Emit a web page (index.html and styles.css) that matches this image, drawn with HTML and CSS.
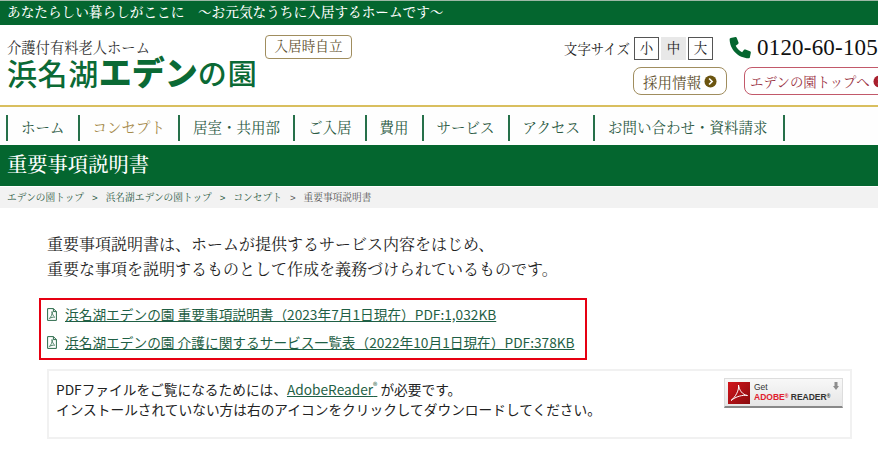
FILE: index.html
```html
<!DOCTYPE html>
<html lang="ja">
<head>
<meta charset="utf-8">
<title>重要事項説明書</title>
<link rel="stylesheet" href="styles.css">
</head>
<body>
<div class="tagline">あなたらしい暮らしがここに　～お元気なうちに入居するホームです～</div>
<header class="header">
  <div class="brand">
    <div class="brand-text">
      <p class="brand-sub">介護付有料老人ホーム</p>
      <p class="brand-name"><span class="brand-a">浜名湖</span><span class="brand-b">エデン</span><span class="brand-c">の園</span></p>
    </div>
    <span class="badge">入居時自立</span>
  </div>
  <div class="tools">
    <div class="tools-top">
      <span class="size-label">文字サイズ</span>
      <div class="sizes">
        <span class="size">小</span>
        <span class="size size-on">中</span>
        <span class="size">大</span>
      </div>
      <svg class="phone" viewBox="0 0 24 24" width="22" height="22"><path fill="#04662f" d="M1.800 1 7 .1c.7-.1 1.300.2 1.500.9l1.900 5c.2.600 0 1.200-.5 1.500L7.300 9.600c1.500 3 4 5.500 7 7l2.100-2.600c.4-.5 1-.6 1.500-.4l5 2c.7.200 1 .9.900 1.500l-1 5.100c-.1.600-.7 1.100-1.300 1.100C10.300 23.300.7 13.700.7 2.300.7 1.700 1.200 1.100 1.800 1Z"/></svg>
      <span class="tel">0120-60-1050</span>
    </div>
    <div class="tools-bottom">
      <a class="pill pill-gold">採用情報<svg class="go" viewBox="0 0 14 14" width="13" height="13"><circle cx="7" cy="7" r="6.500" fill="#6b5510"/><path d="M5.500 3.800 8.700 7l-3.200 3.200" fill="none" stroke="#fff" stroke-width="1.800"/></svg></a>
      <a class="pill pill-red">エデンの園トップへ<svg class="go" viewBox="0 0 14 14" width="13" height="13"><circle cx="7" cy="7" r="6.500" fill="#a81f2d"/><path d="M5.500 3.800 8.700 7l-3.200 3.200" fill="none" stroke="#fff" stroke-width="1.800"/></svg></a>
    </div>
  </div>
</header>
<nav class="nav">
  <a class="nav-item">ホーム</a>
  <a class="nav-item nav-current">コンセプト</a>
  <a class="nav-item">居室・共用部</a>
  <a class="nav-item">ご入居</a>
  <a class="nav-item">費用</a>
  <a class="nav-item">サービス</a>
  <a class="nav-item">アクセス</a>
  <a class="nav-item">お問い合わせ・資料請求</a>
</nav>
<h1 class="title">重要事項説明書</h1>
<ol class="crumbs">
  <li>エデンの園トップ</li>
  <li>浜名湖エデンの園トップ</li>
  <li>コンセプト</li>
  <li class="crumb-last">重要事項説明書</li>
</ol>
<main class="main">
  <p class="lead">重要事項説明書は、ホームが提供するサービス内容をはじめ、<br>重要な事項を説明するものとして作成を義務づけられているものです。</p>
  <div class="links">
    <a class="link"><svg class="pdf" viewBox="0 0 10 13" width="10" height="13"><path d="M.6.600h5.800l3 3v8.800H.6Z M6.400.6v3h3" fill="none" stroke="#2c6a4a"/><path d="M5 3.500c.4 3-1 5.500-2.700 7 2-1 3.500-1.500 5.400-1.300-1.500-1-2.400-3.200-2.700-5.700Z" fill="none" stroke="#2c6a4a" stroke-width=".8"/></svg><span>浜名湖エデンの園 重要事項説明書（2023年7月1日現在）PDF:1,032KB</span></a>
    <a class="link"><svg class="pdf" viewBox="0 0 10 13" width="10" height="13"><path d="M.6.600h5.800l3 3v8.800H.6Z M6.400.6v3h3" fill="none" stroke="#2c6a4a"/><path d="M5 3.500c.4 3-1 5.500-2.700 7 2-1 3.500-1.500 5.400-1.300-1.500-1-2.400-3.200-2.700-5.700Z" fill="none" stroke="#2c6a4a" stroke-width=".8"/></svg><span>浜名湖エデンの園 介護に関するサービス一覧表（2022年10月1日現在）PDF:378KB</span></a>
  </div>
  <div class="notice">
    <p class="notice-text">PDFファイルをご覧になるためには、<a class="adobe-link">AdobeReader<sup>®</sup></a> が必要です。<br>インストールされていない方は右のアイコンをクリックしてダウンロードしてください。</p>
    <a class="getreader">
      <svg class="reader-logo" viewBox="0 0 22 22" width="22" height="22"><defs><linearGradient id="readerRed" x1="0" y1="0" x2="1" y2="1"><stop offset="0" stop-color="#d2151b"/><stop offset="1" stop-color="#8a0c0f"/></linearGradient></defs><rect width="22" height="22" fill="url(#readerRed)"/><path d="M10.500 3c.9 5-3 12-7.500 15.500M10.500 3c.6 5 4 10 9 10.500-5-.8-11.500 1-16.500 5" fill="none" stroke="#fff" stroke-width="1"/></svg>
      <span class="reader-text"><span class="reader-get">Get</span><span class="reader-name"><b class="reader-red">ADOBE<small class="reader-mark">®</small></b> READER<small class="reader-mark">®</small></span></span>
      <svg class="reader-arrow" viewBox="0 0 6 8" width="6" height="8"><path d="M1.500 0h3v4H6L3 8 0 4h1.500Z" fill="#8d8d8d"/></svg>
    </a>
  </div>
</main>
</body>
</html>
```
FILE: styles.css
```css
* { box-sizing: border-box; }
html, body { margin: 0; padding: 0; overflow: hidden; width: 878px; height: 454px; background: #fff; }
body { font-family: "Liberation Serif", "Noto Serif CJK JP", "Noto Sans CJK JP", serif; color: #222; }
p, h1, ol { margin: 0; padding: 0; }
a { color: inherit; }

.tagline { margin-top: 1px; height: 24px; background: #04662f; color: #fff; font-size: 13.650px; line-height: 24px; padding-left: 7px; font-weight: 500; box-shadow: 0 -1px 0 #9db8a6; white-space: nowrap; }

.header { display: flex; justify-content: space-between; width: 878px; height: 80px; }
.brand { display: flex; align-items: flex-start; padding: 10px 0 0 7px; }
.brand-text { width: 258px; padding-top: 5px; }
.brand-sub { font-size: 14.300px; line-height: 17px; color: #333; white-space: nowrap; }
.brand-name { font-family: "Noto Sans CJK JP", sans-serif; color: #0b6a35; line-height: 30px; white-space: nowrap; margin-top: -1px; }
.brand-a { font-size: 30px; font-weight: 500; letter-spacing: .6px; }
.brand-b { font-size: 33px; font-weight: 900; }
.brand-c { font-size: 29px; font-weight: 500; letter-spacing: 1px; }
.badge { border: 1px solid #a08d5e; border-radius: 4px; height: 24px; width: 87px; font-size: 13.600px; line-height: 22px; text-align: center; color: #5f5130; white-space: nowrap; }

.tools { flex: none; width: 314px; padding-top: 11px; overflow: hidden; }
.tools-top { display: flex; align-items: center; white-space: nowrap; height: 24px; }
.size-label { font-size: 13.400px; width: 70px; color: #222; flex: none; }
.sizes { display: flex; gap: 2px; flex: none; }
.size { width: 25px; height: 23px; border: 1px solid #555; font-size: 13.500px; line-height: 21px; text-align: center; }
.size-on { background: #e8e8e8; border-color: #e8e8e8; }
.phone { margin-left: 16px; flex: none; }
.tel { font-size: 23px; margin-left: 6px; color: #111; letter-spacing: .2px; }
.tools-bottom { display: flex; gap: 17px; margin-top: 7px; margin-left: 69px; white-space: nowrap; }
.pill { display: flex; align-items: center; height: 28px; border-radius: 8px; flex: none; }
.pill-gold { width: 94px; border: 1px solid #a08d5e; padding-left: 9px; font-size: 14.500px; color: #5f5130; }
.pill-red { width: 150px; border: 1px solid #c2596a; padding-left: 5px; font-size: 13.400px; color: #9a3344; }
.go { margin-left: 3px; flex: none; }

.nav { display: flex; align-items: center; height: 40px; border-top: 2px solid #d9bf5f; padding: 4px 0 0 6px; background: #fefefe; }
.nav-item { height: 26px; border-left: 2px solid #26704a; padding: 0 13px; font-size: 14.500px; line-height: 26px; color: #2c5a44; white-space: nowrap; }
.nav-item:last-child { border-right: 2px solid #26704a; padding-right: 15px; }
.nav-current { color: #a68b4c; }

.title { height: 41px; background: #04662f; color: #fff; font-size: 20.300px; font-weight: 500; line-height: 40px; padding-left: 7px; }
.crumbs { list-style: none; display: flex; height: 21px; margin-top: 1px; background: #f2f2f2; padding-left: 7px; font-size: 9.700px; line-height: 21px; color: #2c5a44; white-space: nowrap; }
.crumbs li + li::before { content: ">"; margin: 0 8px; font-family: "Liberation Sans", sans-serif; }
.crumb-last { color: #555; }

.main { padding: 24px 26px 0 47px; }
.lead { font-size: 16px; line-height: 25px; color: #222; white-space: nowrap; }
.links { width: 548px; height: 62px; margin: 16px 0 9px -8px; border: 2px solid #e60012; padding: 2px 0 0 6px; display: flex; flex-direction: column; gap: 4px; }
.link { display: flex; align-items: center; gap: 8px; height: 24px; font-family: "Noto Sans CJK JP", sans-serif; font-size: 13.700px; color: #1f5f45; white-space: nowrap; }
.link span { text-decoration: underline; }
.pdf { flex: none; }

.notice { display: flex; justify-content: space-between; height: 70px; border: 2px solid #f1f1f1; padding: 7px 7px 0 7px; }
.notice-text { font-family: "Noto Sans CJK JP", sans-serif; font-size: 13.700px; line-height: 20px; color: #222; white-space: nowrap; margin-top: 1px; }
.adobe-link { color: #1f5f45; text-decoration: underline; }
.adobe-link sup { font-size: 9px; line-height: 0; }
.getreader { display: flex; align-items: center; position: relative; width: 119px; height: 30px; padding-left: 3px; gap: 4px; background: linear-gradient(#f8f8f8, #e6e6e6); border: 1px solid #ddd; border-bottom: 2px solid #888; flex: none; font-family: "Liberation Sans", sans-serif; }
.reader-logo { flex: none; }
.reader-text { display: flex; flex-direction: column; font-size: 8.500px; line-height: 9px; color: #333; }
.reader-get { font-weight: 400; }
.reader-name { font-weight: 700; white-space: nowrap; }
.reader-red { color: #e0202c; }
.reader-mark { font-size: 5px; vertical-align: 2px; }
.reader-arrow { position: absolute; right: 3px; top: 3px; }
```
